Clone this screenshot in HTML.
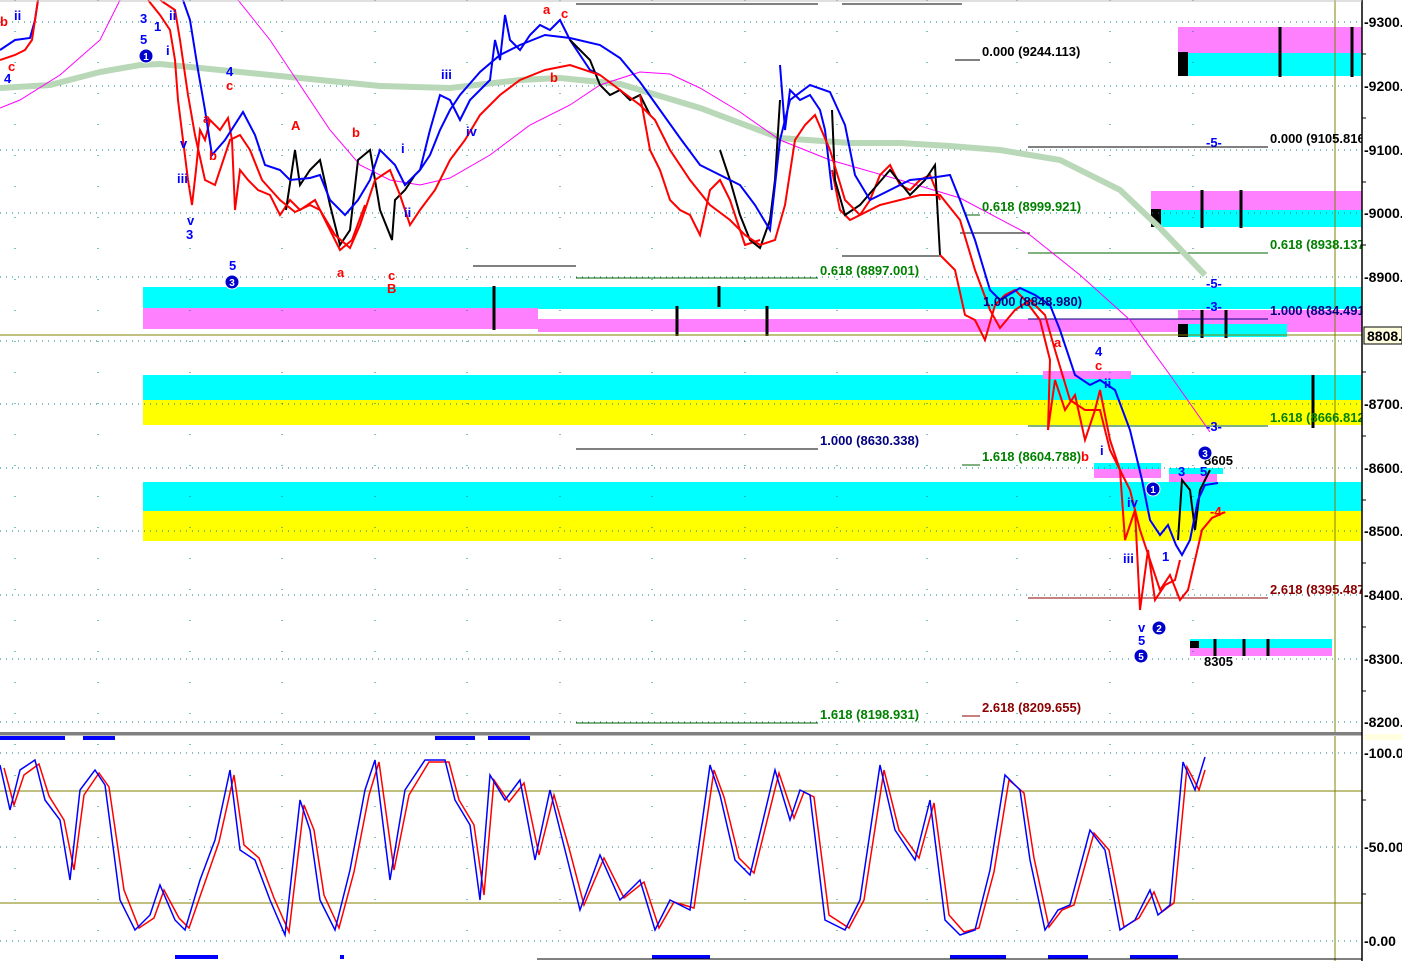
<!DOCTYPE html>
<html><head><meta charset="utf-8"><style>
html,body{margin:0;padding:0;background:#fff;}
svg{display:block;font-family:"Liberation Sans",sans-serif;font-weight:bold;}
</style></head><body>
<svg width="1402" height="961" viewBox="0 0 1402 961" xmlns="http://www.w3.org/2000/svg">
<rect width="1402" height="961" fill="#fff"/>
<rect x="143" y="287" width="1219" height="22" fill="#00ffff"/>
<rect x="143" y="308" width="395" height="21" fill="#ff80ff"/>
<rect x="538" y="319" width="824" height="13" fill="#ff80ff"/>
<rect x="143" y="375" width="1219" height="25" fill="#00ffff"/>
<rect x="143" y="400" width="1219" height="25" fill="#ffff00"/>
<rect x="143" y="482" width="1219" height="29" fill="#00ffff"/>
<rect x="143" y="511" width="1219" height="30" fill="#ffff00"/>
<rect x="1178" y="27" width="184" height="26" fill="#ff80ff"/>
<rect x="1178" y="53" width="184" height="23" fill="#00ffff"/>
<rect x="1178" y="52" width="10" height="24" fill="#000"/>
<rect x="1151" y="191" width="211" height="19" fill="#ff80ff"/>
<rect x="1151" y="210" width="211" height="17" fill="#00ffff"/>
<rect x="1151" y="209" width="10" height="18" fill="#000"/>
<rect x="1178" y="310" width="184" height="18" fill="#ff80ff"/>
<rect x="1178" y="324" width="109" height="13" fill="#00ffff"/>
<rect x="1178" y="324" width="10" height="13" fill="#000"/>
<rect x="1043" y="371" width="88" height="8" fill="#ff80ff"/>
<rect x="1094" y="463" width="67" height="6" fill="#00ffff"/><rect x="1094" y="469" width="67" height="9" fill="#ff80ff"/>
<rect x="1169" y="468" width="54" height="6" fill="#00ffff"/><rect x="1169" y="474" width="48" height="8" fill="#ff80ff"/>
<rect x="1190" y="639" width="142" height="9" fill="#00ffff"/><rect x="1190" y="648" width="142" height="8" fill="#ff80ff"/>
<g stroke="#000" stroke-width="3">
<line x1="1280" y1="27" x2="1280" y2="77"/><line x1="1352" y1="27" x2="1352" y2="77"/>
<line x1="1202" y1="190" x2="1202" y2="228"/><line x1="1241" y1="190" x2="1241" y2="228"/>
<line x1="1202" y1="310" x2="1202" y2="338"/><line x1="1226" y1="310" x2="1226" y2="338"/>
<line x1="494" y1="286" x2="494" y2="330"/><line x1="719" y1="286" x2="719" y2="307"/>
<line x1="677" y1="306" x2="677" y2="336"/><line x1="767" y1="306" x2="767" y2="336"/>
<line x1="1313" y1="375" x2="1313" y2="428"/>
<line x1="1215" y1="639" x2="1215" y2="656"/><line x1="1244" y1="639" x2="1244" y2="656"/><line x1="1268" y1="639" x2="1268" y2="656"/>
</g>
<rect x="1190" y="641" width="9" height="7" fill="#000"/>
<g stroke="#008080" stroke-width="1" stroke-dasharray="1,5">
<line x1="0" y1="22" x2="1362" y2="22"/><line x1="0" y1="86" x2="1362" y2="86"/><line x1="0" y1="150" x2="1362" y2="150"/>
<line x1="0" y1="213" x2="1362" y2="213"/><line x1="0" y1="277" x2="1362" y2="277"/><line x1="0" y1="341" x2="1362" y2="341"/>
<line x1="0" y1="404" x2="1362" y2="404"/><line x1="0" y1="468" x2="1362" y2="468"/><line x1="0" y1="531" x2="1362" y2="531"/>
<line x1="0" y1="595" x2="1362" y2="595"/><line x1="0" y1="659" x2="1362" y2="659"/><line x1="0" y1="722" x2="1362" y2="722"/>
<line x1="0" y1="753" x2="1362" y2="753"/><line x1="0" y1="847" x2="1362" y2="847"/><line x1="0" y1="941" x2="1362" y2="941"/>
</g>
<g stroke="#008080" stroke-width="1" stroke-dasharray="1,30">
<line x1="15" y1="0" x2="15" y2="961"/><line x1="98" y1="0" x2="98" y2="961"/><line x1="190" y1="0" x2="190" y2="961"/>
<line x1="282" y1="0" x2="282" y2="961"/><line x1="375" y1="0" x2="375" y2="961"/><line x1="467" y1="0" x2="467" y2="961"/>
<line x1="560" y1="0" x2="560" y2="961"/><line x1="652" y1="0" x2="652" y2="961"/><line x1="745" y1="0" x2="745" y2="961"/>
<line x1="837" y1="0" x2="837" y2="961"/><line x1="927" y1="0" x2="927" y2="961"/><line x1="1017" y1="0" x2="1017" y2="961"/>
<line x1="1110" y1="0" x2="1110" y2="961"/><line x1="1193" y1="0" x2="1193" y2="961"/>
</g>
<g stroke-width="1">
<line x1="955" y1="60" x2="980" y2="60" stroke="#000"/>
<line x1="1028" y1="147" x2="1268" y2="147" stroke="#000"/>
<line x1="965" y1="215" x2="980" y2="215" stroke="#006400"/>
<line x1="960" y1="233" x2="1030" y2="233" stroke="#000"/>
<line x1="1028" y1="253" x2="1268" y2="253" stroke="#006400"/>
<line x1="842" y1="256" x2="940" y2="256" stroke="#000"/>
<line x1="473" y1="266" x2="576" y2="266" stroke="#000"/>
<line x1="576" y1="278" x2="818" y2="278" stroke="#006400"/>
<line x1="1028" y1="319" x2="1268" y2="319" stroke="#000080"/>
<line x1="1028" y1="426" x2="1268" y2="426" stroke="#006400"/>
<line x1="576" y1="449" x2="818" y2="449" stroke="#000"/>
<line x1="962" y1="465" x2="980" y2="465" stroke="#006400"/>
<line x1="1028" y1="598" x2="1268" y2="598" stroke="#8b0000"/>
<line x1="576" y1="723" x2="818" y2="723" stroke="#006400"/>
<line x1="962" y1="716" x2="980" y2="716" stroke="#8b0000"/>
<line x1="576" y1="4" x2="818" y2="4" stroke="#000"/>
<line x1="842" y1="4" x2="962" y2="4" stroke="#000"/>
</g>
<line x1="0" y1="335" x2="1362" y2="335" stroke="#808000" stroke-width="1"/>
<line x1="1335" y1="0" x2="1335" y2="961" stroke="#808000" stroke-width="1"/>
<line x1="0" y1="791" x2="1362" y2="791" stroke="#808000"/>
<line x1="0" y1="903" x2="1362" y2="903" stroke="#808000"/>
<polyline fill="none" stroke="#b8d8b8" stroke-width="6" points="0,88 50,85 100,72 140,65 160,64 220,70 300,78 380,86 450,88 520,80 560,78 620,84 700,108 780,138 850,143 900,143 950,146 1000,150 1060,160 1120,190 1160,228 1205,275"/>
<polyline fill="none" stroke="#ff00ff" stroke-width="1" points="0,108 20,100 60,75 100,40 120,0"/>
<polyline fill="none" stroke="#ff00ff" stroke-width="1" points="238,0 270,40 300,85 330,130 360,165 390,180 420,185 450,178 490,155 530,125 570,105 600,85 640,72 670,74 700,88 740,112 780,140 830,160 900,180 960,198 1030,235 1080,275 1130,320 1170,375 1210,432"/>
<polyline fill="none" stroke="#ff0000" stroke-width="2" points="148,0 160,15 170,30 175,60 178,100 183,140 188,180 192,205 196,170 200,130 205,140 210,120 220,130 228,118 232,140 235,210 240,170 248,180 258,190 270,195 280,215 290,200 300,210 315,200 330,230 340,250 352,240 365,205"/>
<polyline fill="none" stroke="#000" stroke-width="2" points="286,210 295,150 300,185 310,170 320,160 330,205 340,245 350,230 358,160 370,150 380,210 392,240 395,200 405,190 415,175 420,170"/>
<polyline fill="none" stroke="#0000ff" stroke-width="2" points="420,170 430,130 440,95 450,100 460,120 470,100 480,90 490,80 495,40 500,60 505,15 510,40 520,50 530,35 540,25 550,30 560,20 570,40 580,55 590,70 600,75"/>
<polyline fill="none" stroke="#000" stroke-width="2" points="570,40 590,60 600,85 610,95 620,90 630,100 640,95 650,115"/>
<polyline fill="none" stroke="#ff0000" stroke-width="2" points="640,95 650,150 660,170 670,200 680,210 690,215 700,235 710,190 720,180 730,200 745,245 760,240"/>
<polyline fill="none" stroke="#000" stroke-width="2" points="720,150 730,180 740,215 750,240 760,248 770,220 775,180 780,100"/>
<polyline fill="none" stroke="#0000ff" stroke-width="2" points="780,65 785,130 790,90 800,100 810,95 820,110 825,130 832,190"/>
<polyline fill="none" stroke="#ff0000" stroke-width="2" points="832,170 840,210 850,220 860,215 870,200 880,175 890,165 900,185 910,190 920,180 930,175 940,200"/>
<polyline fill="none" stroke="#000" stroke-width="2" points="832,110 835,180 845,215 860,205 890,170 910,195 925,180 935,165 940,255"/>
<polyline fill="none" stroke="#ff0000" stroke-width="2" points="940,255 955,270 965,315 975,320 985,340 995,305 1005,295 1015,290 1025,300 1040,320 1050,360 1048,430 1055,380 1065,410 1075,395 1085,440 1095,410 1100,390 1110,440 1120,470 1125,540 1135,510 1140,610 1148,550 1155,600 1165,585 1175,580 1180,560"/>
<polyline fill="none" stroke="#000" stroke-width="2" points="1178,540 1182,480 1190,490 1195,530 1200,490 1205,480 1210,470"/>
<polyline fill="none" stroke="#0000ff" stroke-width="2" points="0,50 15,40 30,38 35,20 38,0"/>
<polyline fill="none" stroke="#0000ff" stroke-width="2" points="183,0 190,20 198,70 205,110 212,155 225,140 243,112 255,135 265,165 280,170 290,180 310,178 320,175 330,200 345,215 358,200 370,180 380,150 395,165 405,185 420,170 430,155 440,130 450,110 460,95 480,72 500,55 520,45 545,35 570,38 600,45 620,58 640,82 660,110 680,138 700,165 720,175 740,185 755,205 770,230 780,140 790,100 810,85 830,92 845,125 855,175 870,200 890,190 910,180 930,178 950,175 960,200 975,240 990,290 1000,300 1020,288 1035,295 1050,305 1060,330 1075,375 1090,385 1100,380 1115,390 1130,430 1142,480 1150,520 1160,535 1168,525 1176,545 1182,555 1190,540 1198,500 1205,485 1218,483"/>
<polyline fill="none" stroke="#ff0000" stroke-width="2" points="0,60 15,55 25,50 32,40 38,0"/>
<polyline fill="none" stroke="#ff0000" stroke-width="2" points="160,0 175,10 180,40 188,95 195,135 205,180 215,185 230,140 240,135 250,150 262,180 280,200 295,212 310,205 320,210 335,235 350,248 360,225 375,180 390,170 400,195 410,225 420,210 435,190 450,160 465,140 480,115 500,95 520,80 545,70 570,65 600,75 620,90 640,105 655,120 670,150 690,180 710,205 730,220 745,235 760,245 775,240 785,205 795,140 805,125 815,115 830,150 845,200 860,215 880,205 900,200 920,195 940,195 960,220 975,270 990,310 1000,328 1015,310 1030,300 1045,315 1055,350 1070,400 1085,410 1100,410 1110,450 1120,470 1130,490 1140,530 1150,560 1160,590 1170,575 1180,600 1188,590 1195,560 1202,530 1212,518 1225,512"/>
<g font-size="13">
<text x="982" y="56" fill="#000">0.000 (9244.113)</text>
<text x="1270" y="143" fill="#000">0.000 (9105.816</text>
<text x="982" y="211" fill="#008000">0.618 (8999.921)</text>
<text x="1270" y="249" fill="#008000">0.618 (8938.137</text>
<text x="820" y="275" fill="#008000">0.618 (8897.001)</text>
<text x="983" y="306" fill="#000080">1.000 (8848.980)</text>
<text x="1270" y="315" fill="#000080">1.000 (8834.491</text>
<text x="1270" y="422" fill="#008000">1.618 (8666.812</text>
<text x="820" y="445" fill="#000080">1.000 (8630.338)</text>
<text x="982" y="461" fill="#008000">1.618 (8604.788)</text>
<text x="1270" y="594" fill="#8b0000">2.618 (8395.487</text>
<text x="820" y="719" fill="#008000">1.618 (8198.931)</text>
<text x="982" y="712" fill="#8b0000">2.618 (8209.655)</text>
<text x="1204" y="465" fill="#000">8605</text>
<text x="1204" y="666" fill="#000">8305</text>
</g>
<g font-size="13" fill="#0000ff">
<text x="1206" y="147">-5-</text><text x="1206" y="288">-5-</text><text x="1206" y="311">-3-</text><text x="1206" y="431">-3-</text>
<text x="4" y="83">4</text><text x="14" y="20">ii</text><text x="140" y="23">3</text><text x="140" y="44">5</text><text x="154" y="31">1</text>
<text x="166" y="55">i</text><text x="169" y="20">ii</text><text x="180" y="148">v</text><text x="177" y="183">iii</text><text x="187" y="225">v</text><text x="186" y="239">3</text>
<text x="226" y="76">4</text><text x="229" y="270">5</text><text x="441" y="79">iii</text><text x="466" y="136">iv</text><text x="401" y="153">i</text><text x="404" y="217">ii</text>
<text x="1095" y="356">4</text><text x="1104" y="388">ii</text><text x="1100" y="455">i</text><text x="1127" y="507">iv</text><text x="1123" y="563">iii</text>
<text x="1138" y="632">v</text><text x="1138" y="645">5</text><text x="1162" y="561">1</text><text x="1178" y="476">3</text><text x="1200" y="476">5</text>
</g>
<g font-size="13" fill="#ff0000">
<text x="0" y="26">b</text><text x="8" y="71">c</text><text x="226" y="90">c</text><text x="203" y="123">a</text><text x="209" y="160">b</text>
<text x="291" y="130">A</text><text x="352" y="137">b</text><text x="337" y="277">a</text><text x="388" y="280">c</text><text x="387" y="293">B</text>
<text x="543" y="14">a</text><text x="561" y="18">c</text><text x="550" y="82">b</text><text x="1095" y="370">c</text><text x="1081" y="461">b</text><text x="1054" y="347">a</text><text x="1210" y="516">-4-</text>
</g>
<g fill="#0000cc" stroke="#fff" stroke-width="1">
<circle cx="146" cy="56" r="7"/><circle cx="232" cy="282" r="7"/><circle cx="1153" cy="489" r="7"/><circle cx="1159" cy="628" r="7"/><circle cx="1141" cy="656" r="7"/><circle cx="1205" cy="453" r="7"/>
</g>
<g font-size="10" fill="#fff" text-anchor="middle">
<text x="146" y="60">1</text><text x="232" y="286">3</text><text x="1153" y="493">1</text><text x="1159" y="632">2</text><text x="1141" y="660">5</text><text x="1205" y="457">3</text>
</g>
<rect x="0" y="732" width="1402" height="3" fill="#808080"/>
<rect x="0" y="735" width="1402" height="1" fill="#c0c0c0"/>
<polyline fill="none" stroke="#ff0000" stroke-width="1.5" points="4,768 14,805 24,775 39,764 49,796 64,820 74,870 84,795 99,773 109,787 124,890 139,928 154,918 164,890 179,918 189,928 204,885 219,842 234,775 244,845 259,858 274,898 289,932 304,805 314,830 324,895 339,928 354,872 369,795 379,762 394,870 409,795 429,762 449,762 459,800 474,825 484,895 494,780 509,802 524,783 539,855 554,795 569,848 584,905 604,858 624,898 644,882 659,928 674,902 694,908 714,770 724,797 739,858 754,873 779,773 794,818 804,792 814,797 829,915 849,928 864,900 884,770 899,830 919,858 934,803 949,915 964,932 979,928 994,872 1009,780 1024,793 1034,858 1049,927 1062,910 1074,905 1094,833 1109,850 1124,927 1139,918 1154,892 1162,912 1174,903 1187,767 1199,790 1205,770"/>
<polyline fill="none" stroke="#0000ff" stroke-width="1.5" points="0,765 10,810 20,770 35,760 45,800 60,820 70,880 80,790 95,770 105,785 120,900 135,930 150,915 160,885 175,920 185,930 200,880 215,840 230,770 240,850 255,860 270,900 285,935 300,800 310,830 320,900 335,930 350,870 365,790 375,760 390,880 405,790 425,760 445,760 455,800 470,825 480,900 490,775 505,800 520,780 535,860 550,790 565,850 580,910 600,855 620,900 640,880 655,930 670,900 690,910 710,765 720,795 735,860 750,875 775,770 790,820 800,790 810,795 825,920 845,930 860,900 880,765 895,830 915,860 930,800 945,920 960,935 975,930 990,870 1005,775 1020,790 1030,860 1045,930 1058,910 1070,905 1090,830 1105,850 1120,930 1135,920 1150,890 1158,915 1170,905 1183,762 1195,790 1205,757"/>
<g fill="#0000ff">
<rect x="0" y="736" width="65" height="4"/><rect x="83" y="736" width="32" height="4"/><rect x="435" y="736" width="40" height="4"/><rect x="488" y="736" width="42" height="4"/>
<rect x="175" y="955" width="43" height="4"/><rect x="340" y="955" width="4" height="4"/><rect x="652" y="955" width="58" height="4"/><rect x="950" y="955" width="56" height="4"/><rect x="1048" y="955" width="40" height="4"/><rect x="1130" y="955" width="48" height="4"/>
</g>
<line x1="537" y1="959" x2="1362" y2="959" stroke="#000" stroke-width="1"/>
<rect x="1362" y="0" width="40" height="961" fill="#fff"/>
<line x1="1362" y1="0" x2="1362" y2="961" stroke="#000" stroke-width="1.5"/>
<line x1="0" y1="1" x2="1362" y2="1" stroke="#c0c0c0"/>
<g font-size="14" fill="#000">
<text x="1364" y="27">-9300.</text><text x="1364" y="91">-9200.</text><text x="1364" y="155">-9100.</text><text x="1364" y="218">-9000.</text>
<text x="1364" y="282">-8900.</text><text x="1364" y="409">-8700.</text><text x="1364" y="473">-8600.</text><text x="1364" y="536">-8500.</text>
<text x="1364" y="600">-8400.</text><text x="1364" y="664">-8300.</text><text x="1364" y="727">-8200.</text>
<text x="1364" y="758">-100.0</text><text x="1364" y="852">-50.00</text><text x="1364" y="946">-0.00</text>
</g>
<rect x="1364" y="327" width="38" height="17" fill="#ffffe0" stroke="#000" stroke-width="1"/>
<text x="1367" y="341" font-size="14" fill="#000">8808.</text>
<rect x="1364" y="734" width="38" height="6" fill="#ffffe0"/>
<g stroke="#000"><line x1="1362" y1="54" x2="1366" y2="54"/><line x1="1362" y1="118" x2="1366" y2="118"/><line x1="1362" y1="182" x2="1366" y2="182"/><line x1="1362" y1="245" x2="1366" y2="245"/><line x1="1362" y1="372" x2="1366" y2="372"/><line x1="1362" y1="436" x2="1366" y2="436"/><line x1="1362" y1="500" x2="1366" y2="500"/><line x1="1362" y1="563" x2="1366" y2="563"/><line x1="1362" y1="627" x2="1366" y2="627"/><line x1="1362" y1="691" x2="1366" y2="691"/><line x1="1362" y1="800" x2="1366" y2="800"/><line x1="1362" y1="894" x2="1366" y2="894"/></g>
</svg>
</body></html>
